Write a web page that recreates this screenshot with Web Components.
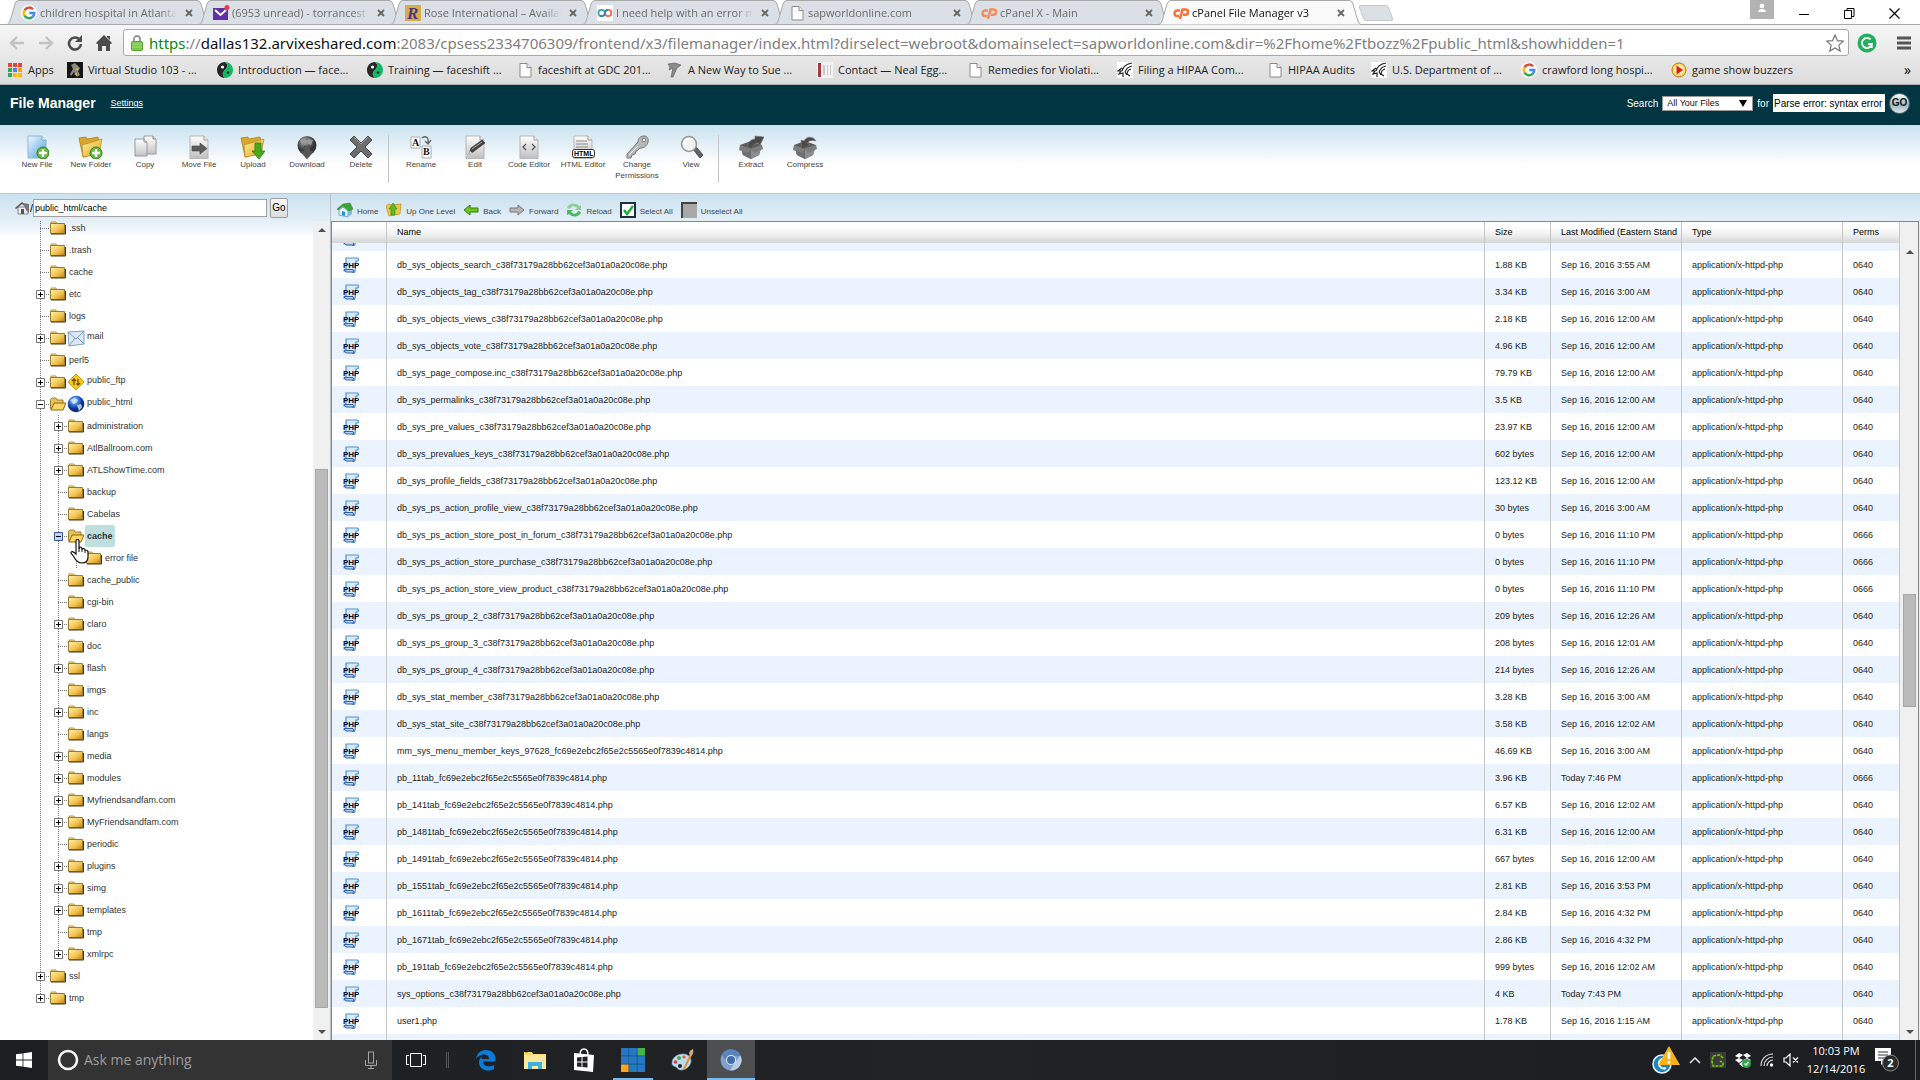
<!DOCTYPE html>
<html lang="en">
<head>
<meta charset="utf-8">
<title>cPanel File Manager v3</title>
<style>
html,body{margin:0;height:100%;overflow:hidden}
body{font-family:"Liberation Sans",Arial,sans-serif;background:#fff}
file-manager-page{height:100vh}
</style>
</head>
<body>
<file-manager-page></file-manager-page>
<script>
const UI = '"Open Sans","Noto Sans",sans-serif';
const page = '<path d="M3 1.500h7l4 4v9.500H3z" fill="#fff" stroke="#8a8a8a"/><path d="M10 1.500v4h4" fill="#eee" stroke="#8a8a8a"/>';
const doc = '<defs><linearGradient id="d" x2="0" y2="1"><stop stop-color="#fff"/><stop offset="1" stop-color="#bdbdbd"/></linearGradient></defs><path d="M3 1h14l4 4v19H3z" fill="url(#d)" stroke="#b5b5b5"/><path d="M17 1v4h4" fill="#f4f4f4" stroke="#999"/>';
const bigFolder = '<defs><linearGradient id="f" x2="1" y2="1"><stop stop-color="#ffefa0"/><stop offset="1" stop-color="#e0a520"/></linearGradient></defs><path d="M1 3l7-1 1 2 11-2 1 4 1 9-15 7H5z" fill="#d9a62e" stroke="#a87a12" stroke-width=".7"/><path d="M4 10l20-6-3 15-16 3z" fill="url(#f)" stroke="#b5861c" stroke-width=".7"/>';
const plus = '<circle cx="18" cy="18" r="6" fill="#66b83c" stroke="#34801c"/><path d="M18 14v8M14 18h8" stroke="#fff" stroke-width="2.400"/>';
const G = '<circle cx="8" cy="8" r="8" fill="#fff"/><g fill="none" stroke-width="2.400"><path d="M12 4.200A5.300 5.300 0 0 0 3.500 5.300" stroke="#ea4335"/><path d="M3.500 5.300A5.300 5.300 0 0 0 3.500 10.700" stroke="#fbbc05"/><path d="M3.500 10.700A5.300 5.300 0 0 0 11.500 12" stroke="#34a853"/><path d="M11.500 12A5.300 5.300 0 0 0 13.300 8H8.300" stroke="#4285f4"/></g>';
const cp = '<g fill="none" stroke="#ff6c2c" stroke-width="2.400"><path d="M7 5.500H4.200a2.700 2.700 0 0 0 0 5.400H6"/><path d="M7 14l2.500-9.500h3a2.500 2.500 0 0 1 0 5.200H10"/></g>';
const face = '<path d="M8 0C3 0 0 4 0 8s3 8 8 8c-3-3-3-5 0-8s3-6 0-8z" fill="#262626"/><path d="M8 0c5 0 8 4 8 8s-3 8-8 8c-3-3-3-5 0-8s3-6 0-8z" fill="#10b866"/><circle cx="5.500" cy="5" r="1.600" fill="#fff"/><circle cx="11" cy="10.500" r="1.300" fill="#262626"/>';
const hhs = '<path d="M0 0h16v16H0z" fill="#fff"/><g fill="none" stroke="#222" stroke-width="1.200"><path d="M15 1C9 2 6 5 5 9M15 4c-4 1-6 3-7 6M14 7c-3 1-4 3-4 5M5 6L1 9h3l-2 3 4-1v4M8 10l2 3M10 12l3 2"/></g>';
const box = '<path d="M1 10l11-4 11 4-3 10-8 4-8-4z" fill="#5c5c5c"/><path d="M1 10l11 4v10l-8-4z" fill="#6f6f6f"/><path d="M23 10l-11 4v10l8-4z" fill="#8d8d8d"/><path d="M12 14L1 10l-1 5 9 3zM12 14l11-4 1 4-9 4z" fill="#7d7d7d"/>';
const ICONS = {
 google:[16,16,G],
 mail:[16,16,'<path d="M0 3h15v12H0z" fill="#6230a5"/><path d="M2 5l5.500 5L13 5" fill="none" stroke="#fff" stroke-width="2"/><circle cx="14" cy="2.500" r="2.500" fill="#f33"/>'],
 rose:[16,16,'<path d="M0 0h16v16H0z" fill="#d6ae46"/><text x="2" y="14" font-family="Liberation Serif" font-style="italic" font-weight="bold" font-size="17" fill="#51318c">R</text>'],
 loops:[16,16,'<path d="M0 0h16v16H0z" fill="#fff"/><g fill="none" stroke-width="1.800"><circle cx="4.600" cy="8" r="3.200" stroke="#3aa6a0"/><path d="M8 8a3.200 3.200 0 1 1 3.200 3.200A3.200 3.200 0 0 1 8 8" stroke="#ef6b4e"/><path d="M8 8a3.200 3.200 0 0 1-5 2.500M8 8a3.200 3.200 0 0 1 3-3.200" stroke="#3a7fd0"/></g>'],
 page:[16,16,page], cp:[16,16,cp], face:[16,16,face], hhs:[16,16,hhs],
 close:[8,8,'<path d="M1 1l6 6M7 1L1 7" stroke="#666" stroke-width="1.800"/>'],
 back:[18,16,'<path d="M9 2L3 8l6 6M3 8h13" fill="none" stroke="#c2c2c2" stroke-width="2.400"/>'],
 fwd:[18,16,'<path d="M9 2l6 6-6 6M15 8H2" fill="none" stroke="#c2c2c2" stroke-width="2.400"/>'],
 reload:[18,16,'<path d="M13.500 4.500A6 6 0 1 0 15 9" fill="none" stroke="#4c4c4c" stroke-width="2.600"/><path d="M16 0v7H9z" fill="#4c4c4c"/>'],
 home:[18,16,'<path d="M9 0l8 8-1.400 1.200L15 8.500V16h-4v-5H7v5H3V8.500l-.6.700L1 8zM12 1h3v4l-3-3z" fill="#4c4c4c"/>'],
 lock:[12,16,'<path d="M3 8V4a3 3 0 0 1 6 0v4" fill="none" stroke="#969696" stroke-width="1.800"/><rect x=".5" y="6.500" width="11" height="9" rx="1" fill="#7cc84c" stroke="#56a32c"/><path d="M1 9h10M1 12h10" stroke="#a4de7e"/>'],
 star:[18,18,'<path d="M9 1l2.400 5.600 6 .500-4.600 4 1.400 6L9 13.900l-5.200 3.200 1.400-6-4.600-4 6-.500z" fill="#fff" stroke="#777" stroke-width="1.200"/>'],
 gram:[20,20,'<circle cx="10" cy="10" r="9.500" fill="#25ae60"/><path d="M13.500 6.500A5 5 0 1 0 14.800 11H11M14.800 11v4" fill="none" stroke="#fff" stroke-width="1.800"/>'],
 menu:[14,14,'<path d="M0 2h14M0 7h14M0 12h14" stroke="#555" stroke-width="3"/>'],
 user:[24,19,'<path d="M0 0h24v19H0z" fill="#b3b3b3"/><circle cx="12" cy="6" r="2.300" fill="#fff"/><path d="M8 12c0-4 8-4 8 0z" fill="#fff"/>'],
 min:[11,11,'<path d="M0 6.500h10" stroke="#000"/>'],
 restore:[11,11,'<path d="M.5 2.500h7v8h-7zM3 2.500v-2h7v8H8" fill="none" stroke="#000"/>'],
 x:[11,11,'<path d="M.5.500l10 10M10.500.500l-10 10" stroke="#000" stroke-width="1.200"/>'],
 apps:[14,14,'<path d="M0 0h4v4H0zM5 0h4v4H5zM10 0h4v4h-4z" fill="#e8443a"/><path d="M0 5h4v4H0z" fill="#34a853"/><path d="M5 5h4v4H5z" fill="#4285f4"/><path d="M10 5h4v4h-4z" fill="#fb9d05"/><path d="M0 10h4v4H0z" fill="#34a853"/><path d="M5 10h4v4H5zM10 10h4v4h-4z" fill="#fbbc05"/>'],
 vs:[16,16,'<path d="M0 0h16v16H0z" fill="#151515"/><path d="M4 3l4-2 5 5-2 3 2 4-3 2-3-5-3 4-1-2 3-5z" fill="#8b8b82"/><path d="M8 7l4-1-1 3zM7 12l3-1v3z" fill="#d8b430"/>'],
 saw:[16,16,'<path d="M1 2l7-1 6 2-4 3-4 9H4l2-9-4 2 1-3z" fill="#8c8c8c" stroke="#555" stroke-width=".6"/>'],
 neal:[16,16,'<path d="M0 0h16v16H0z" fill="#f2f2f2"/><path d="M1 1h3v14H1z" fill="#a33c42"/><path d="M6 3h2v10H6zM10 3h1v10h-1zM13 3h1v10h-1z" fill="#c9c9c9"/>'],
 buzz:[16,16,'<circle cx="8" cy="8" r="7" fill="#ffd75a" stroke="#b87a10"/><circle cx="8" cy="8" r="4.800" fill="#fff0c0"/><path d="M5.500 3.500l6.500 4.500-6.500 4.500z" fill="#e3180f"/>'],
 newfile:[24,24,'<defs><linearGradient id="n" x2="1" y2="1"><stop stop-color="#f4faff"/><stop offset="1" stop-color="#4f9fe0"/></linearGradient></defs><path d="M3 1h14l4 4v18H3z" fill="url(#n)" stroke="#88b8dc"/><path d="M17 1v4h4" fill="#fff" stroke="#7fa9c8"/>'+plus],
 newfolder:[26,24,bigFolder+plus],
 copy:[24,24,'<defs><linearGradient id="d" x2="0" y2="1"><stop stop-color="#fff"/><stop offset="1" stop-color="#c4c4c4"/></linearGradient></defs><path d="M11 1h9l3 3v15H11z" fill="url(#d)" stroke="#9a9a9a"/><path d="M2 4h9l3 3v14H2z" fill="url(#d)" stroke="#9a9a9a"/><path d="M11 4v3h3M20 1v3h3" fill="#eee" stroke="#888"/>'],
 move:[24,24,doc+'<path d="M5 11h8V8l7 5.500-7 5.500v-3H5z" fill="#5c5c5c" stroke="#444" stroke-width=".6"/>'],
 upload:[26,24,bigFolder+'<path d="M15 8h6v8h4l-6 8-7-8h3z" fill="#4aa81c" stroke="#2e7d0c" stroke-width=".8"/>'],
 download:[24,24,'<defs><radialGradient id="s" cx=".4" cy=".3"><stop stop-color="#aaa"/><stop offset="1" stop-color="#333"/></radialGradient></defs><circle cx="12" cy="10.500" r="9.500" fill="url(#s)"/><path d="M5 5l5-2 1 4-4 3zM13 4l5 1-2 5-4-2z" fill="#999"/><path d="M9 11h6v5h4l-7 8-7-8h4z" fill="#555" stroke="#444" stroke-width=".5"/>'],
 del:[24,24,'<path d="M5 1l7 7 7-7 4 4-7 7 7 7-4 4-7-7-7 7-4-4 7-7-7-7z" fill="#6d6d6d" stroke="#4a4a4a"/><path d="M5 2l7 7 7-7" fill="none" stroke="#a5a5a5"/>'],
 rename:[24,24,'<path d="M2 2h9v11H2zM13 11h9v12h-9z" fill="#fff" stroke="#aaa"/><g font-family="Liberation Serif" font-weight="bold" font-size="10" fill="#111"><text x="3" y="11">A</text><text x="14" y="20">B</text></g><path d="M13 3c4-3 7 0 6 5M16 6l3 3 3-4" fill="none" stroke="#666" stroke-width="1.400"/>'],
 edit:[24,24,doc+'<path d="M6 19l2-6L19 5l3 3L10 17z" fill="#444" stroke="#222" stroke-width=".5"/><path d="M9 14L19 7" stroke="#aaa"/><path d="M6 19l1-3 2 2z" fill="#fff"/>'],
 code:[24,24,doc+'<path d="M9 9l-3 3 3 3M15 9l3 3-3 3" fill="none" stroke="#555" stroke-width="1.300"/>'],
 html:[24,24,doc+'<path d="M5 6h11M5 9h12M5 12h12" stroke="#888"/><rect x="1.500" y="14.500" width="22" height="8" rx="2" fill="#fff" stroke="#333"/><text x="3" y="21" font-family="Liberation Sans" font-weight="bold" font-size="7" fill="#000">HTML</text>'],
 key:[24,24,'<path d="M13 7c0-4 3-6 6-6s5 2 4 6-4 6-7 6l-1 0-3 3-1 0-1 3-3 1-1 3H2v-4z" fill="#b8b8b8" stroke="#777"/><circle cx="19" cy="5" r="1.800" fill="#fff" stroke="#777"/><path d="M4 20l9-9" stroke="#eee"/>'],
 view:[24,24,'<path d="M14 14l3-2 7 8-3 3z" fill="#666" stroke="#444"/><circle cx="10" cy="9" r="7.500" fill="#f2f2f2" stroke="#999" stroke-width="1.600"/><path d="M5 9a5 5 0 0 1 5-5" fill="none" stroke="#fff" stroke-width="2"/>'],
 extract:[25,24,box+'<path d="M9 13c-1-5 3-9 7-9V1l9 1-4 8-2-2c-3 0-5 2-6 5z" fill="#4a4a4a" stroke="#777" stroke-width=".6"/>'],
 compress:[25,24,box+'<path d="M23 6c-2-4-9-6-12 0L8 5l1 9 8-4-3-2c2-3 6-3 9-2z" fill="#4a4a4a" stroke="#777" stroke-width=".6"/>'],
 ghome:[15,14,'<path d="M3 6h10v7H3z" fill="#eee" stroke="#888"/><path d="M0 7l7-6 7 6-1 1-6-5-6 5z" fill="#555"/><path d="M6 8h3v5H6z" fill="#555"/><path d="M8 2l6 1v9l-3-3z" fill="#777"/>'],
 chome:[16,16,'<path d="M2 8l4-3 5 4v6l-9-2z" fill="#e9f3fb" stroke="#6fa8d6"/><path d="M11 8l4-2v6l-4 3z" fill="#7fb8e8"/><path d="M5 9l3 1v4l-3-1z" fill="#1e90d8"/><path d="M0 7l6-5 7-1 3 6-4 2-6-5-5 4z" fill="#36a82e" stroke="#217a1c" stroke-width=".5"/>'],
 up:[16,16,'<path d="M0 4l3-2 2 1 10-1-1 10-11 2z" fill="#f2c746" stroke="#b88b1c" stroke-width=".7"/><path d="M5 13V7H3l4-6 4 6H9v6z" fill="#5fb92b" stroke="#3a8214" stroke-width=".6"/>'],
 larr:[16,16,'<path d="M1 8l6-5v3h8v4H7v3z" fill="#6cc81c" stroke="#347a0a"/>'],
 rarr:[16,16,'<path d="M15 8L9 3v3H1v4h8v3z" fill="#b5b5b5" stroke="#777"/>'],
 cyc:[16,16,'<path d="M1 6c1-5 9-6 12-2l2-1v5H9l2-2C8 3 5 4 4 7z" fill="#8fd09a"/><path d="M15 10c-1 5-9 6-12 2l-2 1V8h6l-2 2c3 3 6 2 7-1z" fill="#4cb85c"/>'],
 chk:[16,16,'<rect x="1" y="1" width="14" height="14" fill="#fff" stroke="#1c3045" stroke-width="2"/><path d="M4 8l3 4 6-8" fill="none" stroke="#1fae32" stroke-width="2.400"/>'],
 unchk:[16,16,'<rect x="1" y="1" width="15" height="15" fill="#a8a8a8"/><path d="M1 16V1h15" fill="none" stroke="#444" stroke-width="2"/>'],
 folder:[16,14,'<defs><linearGradient id="f" x2="1" y2="1"><stop stop-color="#fff3b0"/><stop offset=".6" stop-color="#f0c04a"/><stop offset="1" stop-color="#c07f10"/></linearGradient></defs><path d="M1 3V1h5l1 2" fill="#f6e3a0" stroke="#b99442"/><path d="M.5 2.500h14v10H.5z" fill="url(#f)" stroke="#9c7a30"/><path d="M1 13h14.500V4" fill="none" stroke="#4a3510"/>'],
 ofolder:[16,14,'<path d="M.5 12V2.500L2 1h4l1 2h6v3" fill="#e8c25a" stroke="#a1802f"/><path d="M1 13L4 6h12l-3 7z" fill="#fbd663" stroke="#8a6516"/>'],
 env:[18,18,'<path d="M1 3l16-1v13L2 17z" fill="#dbe9f7" stroke="#7f9fc0"/><path d="M1 3l8 7 8-8M2 17l6-8M17 15l-6-6" fill="none" stroke="#7f9fc0"/>'],
 ftp:[18,18,'<path d="M9 1l8 8-8 8-8-8z" fill="#f9c81e" stroke="#c99708"/><path d="M7 12V6M5 8l2-2 2 2M11 6v6M9.500 10.500l1.500 1.500 2-2" fill="none" stroke="#6e4c00" stroke-width="1.300"/>'],
 globe:[18,18,'<defs><radialGradient id="g" cx=".4" cy=".3"><stop stop-color="#a9d4ff"/><stop offset=".6" stop-color="#2f6fd8"/><stop offset="1" stop-color="#0d2c86"/></radialGradient></defs><circle cx="9" cy="9" r="8.300" fill="url(#g)"/><path d="M3 5l5-2 3 2-2 3-3 1zM10 10l4-1 1 3-3 4z" fill="#d7ecff" opacity=".8"/>'],
 php:[16,16,'<path d="M3 1h11c2 0 2 3 0 3h-1l-1 10c0 2-3 2-3 0H1c0-2 1-2 2-2z" fill="#d6eafc" stroke="#4f8fd0" stroke-width="1.200"/><path d="M1 12.500h9l1 2.500H3z" fill="#b5d3f2" stroke="#2f5fa5"/><text x="0" y="11" font-family="Liberation Sans" font-weight="bold" font-size="8" fill="#00062e">PHP</text>'],
 hand:[20,26,'<path d="M6 2c0-2 3-2 3 0v8l1-2c2 0 2 1 2 2 2-1 3 0 3 1 2 0 3 1 3 2v5c0 5-3 6-6 6-4 0-6-2-8-6l-3-4c0-2 2-2 5 1z" fill="#fff" stroke="#111" stroke-width="1.200"/><path d="M9 10v3M12 10v3M15 11v3" stroke="#111"/>'],
 win:[16,16,'<path d="M0 2.300l6.600-.900v6.200H0zM7.400 1.300L16 0v7.600H7.400zM0 8.400h6.600v6.200L0 13.700zM7.400 8.400H16V16l-8.600-1.200z" fill="#fff"/>'],
 cortana:[22,22,'<circle cx="11" cy="11" r="9" fill="none" stroke="#f4f4f4" stroke-width="2.600"/>'],
 mic:[12,18,'<rect x="3.500" y="1" width="5" height="11" fill="none" stroke="#a5a5a5"/><path d="M.5 9v5.500h11V9M6 14.500V17M3 17.500h6" fill="none" stroke="#a5a5a5"/>'],
 task:[20,16,'<path d="M4.500 1.500h11v13h-11zM3 3.500H.5v9H3M17 3.500h2.500v9H17" fill="none" stroke="#fff"/>'],
 edge:[22,22,'<path d="M1 10C2 3 7 1 11 1c6 0 9 4 9.500 8v3.500H8c0 5 7 6 11 3.500v4c-6 3.500-15 1-15-7 0-3 2-5 4-6-1 1-1.500 2-1.500 3H14c0-6-9-6-13 0z" fill="#0a7cd8"/>'],
 explorer:[22,19,'<path d="M0 1h8l1 2h13v15H0z" fill="#f8d775"/><path d="M0 4h22v14H0z" fill="#ffe79a"/><path d="M4 18v-7h14v7h-4v-3H8v3z" fill="#3bb1e5"/><path d="M1 1h3v1H1z" fill="#e5a400"/>'],
 store:[22,24,'<path d="M1 5l20 2-1 17-19-2z" fill="#fff"/><path d="M7 7c0-8 8-8 8 0" fill="none" stroke="#fff" stroke-width="1.500"/><path d="M4 9.500l4.500-.500v4.500H4zM9.500 9l5-.500v5h-5zM4 14.500h4.500V19L4 18.500zM9.500 14.500h5v5l-5-.500z" fill="#202124"/>'],
 grid9:[24,24,'<path d="M0 0h24v24H0z" fill="#1b4f80"/><path d="M0 0h7.500v7.500H0zM8.200 0h7.500v7.500H8.200zM0 8.200h7.500v7.500H0zM8.200 8.200h7.500v7.500H8.200zM16.500 8.200H24v7.500h-7.500zM8.200 16.500h7.500V24H8.200zM16.500 16.500H24V24h-7.500z" fill="#2578c4"/><path d="M16.500 0H24v7.500h-7.500z" fill="#43b549"/><path d="M0 16.500h7.500V24H0z" fill="#fda31c"/>'],
 paint:[24,24,'<path d="M2 15c0-6 6-9 11-9s8 3 8 7-4 9-10 9c-3 0-3-2-5-3s-4-1-4-4z" fill="#b8ddf0" stroke="#7ba9c0" stroke-width=".6"/><circle cx="9" cy="10" r="2" fill="#4aae3a"/><circle cx="5.500" cy="14" r="1.800" fill="#e23b34"/><circle cx="14" cy="9" r="1.600" fill="#e85b36"/><circle cx="10" cy="18" r="2" fill="#202124"/><path d="M13 21L20 6l2 1-7 14z" fill="#e8892a"/><path d="M19 6c0-3 2-4 4-5 1 3 0 6-2 7z" fill="#d1a878"/>'],
 chromium:[22,22,'<circle cx="11" cy="11" r="10.500" fill="#7f9fcf"/><path d="M11 .5a10.500 10.500 0 0 1 9.500 6H11z" fill="#4a73b0"/><path d="M1.500 6A10.500 10.500 0 0 1 20.500 6.500H11L6.500 12z" fill="#5b84bf"/><path d="M20.500 6.500A10.500 10.500 0 0 1 10 21.500l5-8z" fill="#b9cde8"/><circle cx="11" cy="11" r="5" fill="#e8eff9"/><circle cx="11" cy="11" r="4" fill="#426ca8"/>'],
 warn:[28,28,'<circle cx="10" cy="18" r="9" fill="#1685c4" stroke="#e8f2fa" stroke-width="1.600"/><path d="M14 13a5 5 0 1 0 0 9" fill="none" stroke="#fff" stroke-width="2"/><path d="M17 0l11 19H6z" fill="#f9b41c"/><path d="M17 6v7M17 15v2.500" stroke="#fff" stroke-width="2.600"/>'],
 chev:[12,8,'<path d="M1 7l5-5 5 5" fill="none" stroke="#fff" stroke-width="1.400"/>'],
 nv:[16,16,'<path d="M0 0h16v16H0z" fill="#3b3b3b"/><path d="M13 6L10 3 3 4 2 9l1 5h10v-3l-3-2" fill="none" stroke="#77c800" stroke-width="1.600" stroke-dasharray="3 1"/>'],
 drop:[16,16,'<path d="M4 1L0 4l4 2 4-3zM12 1L8 3l4 3 4-2zM0 8l4 3 4-3-4-2zM16 8l-4 3-4-3 4-2zM4 12l4-3 4 3-4 3z" fill="#fff"/><circle cx="11.500" cy="11.500" r="4.500" fill="#2fa84a"/><path d="M9.500 11.500l1.500 1.500 2.500-3" fill="none" stroke="#fff" stroke-width="1.200"/>'],
 wifi:[14,14,'<g fill="none" stroke="#ddd" stroke-width="1.200"><path d="M1 13C1 6 6 1 13 1M4 13c0-5 4-9 9-9M7 13c0-3 3-6 6-6"/></g><circle cx="11.500" cy="12" r="1.700" fill="#fff"/>'],
 mute:[16,14,'<path d="M1 5h2l4-4v12L3 9H1zM10 4.500l5 5M15 4.500l-5 5" fill="none" stroke="#fff" stroke-width="1.200"/>'],
 note:[25,24,'<path d="M0 0h16v13h-6l-4 4v-4H0z" fill="#fff"/><path d="M3 4h10M3 7h10M3 10h6" stroke="#333"/><circle cx="15.500" cy="15" r="8" fill="#2b2c2e" stroke="#8a8a8a"/><text x="15.500" y="19" text-anchor="middle" font-family="Open Sans" font-weight="bold" font-size="11" fill="#fff">2</text>'],
};

class Base extends HTMLElement {
  constructor(){ super(); this.attachShadow({mode:'open'}); }
  connectedCallback(){ this.shadowRoot.innerHTML = '<style>*{box-sizing:border-box}'+this.css()+'</style>'+this.html(); }
  a(n){ return this.getAttribute(n) || ''; }
}
const I = (n) => `<ui-icon name="${n}"></ui-icon>`;

customElements.define('ui-icon', class extends Base {
  css(){ return ':host{display:block;flex:none;line-height:0}svg{display:block}'; }
  html(){ const [w,h,s]=ICONS[this.a('name')]; return `<svg width="${w}" height="${h}" viewBox="0 0 ${w} ${h}" aria-hidden="true">${s}</svg>`; }
});

customElements.define('browser-tab', class extends Base {
  css(){ return `:host{display:grid;width:202px;height:25px;margin-right:-10px;flex:none;color:#6a6a6a}
  :host([active]){color:#111;position:relative;z-index:1}
  svg,.in{grid-area:1/1}svg{display:block}
  .in{display:flex;align-items:center;min-width:0;padding:0 16px 0 14px;font:11px/16px ${UI};height:26px}
  .t{flex:1;min-width:0;margin:0 8px 0 3px;white-space:nowrap;overflow:hidden;-webkit-mask:linear-gradient(90deg,#000 88%,transparent);}
  button{border:0;background:none;padding:0}`; }
  html(){ const on=this.hasAttribute('active'), dim=!on&&this.a('icon')==='cp';
   return `<svg width="202" height="25" aria-hidden="true"><path d="M0 24.500C3 23.500 3 21 4 18L8 4Q9 .5 12 .5H190Q193 .5 194 4L198 18C199 21 199 23.500 202 24.500" fill="${on?'#fafafa':'#dbe0e7'}" stroke="#a7a9ab"/>${on?'':'<path d="M0 24.500h202" stroke="#a7a9ab"/>'}</svg>
   <div class="in"><span${dim?' style="opacity:.75"':''}>${I(this.a('icon'))}</span><span class="t"><slot></slot></span><button aria-label="Close tab">${I('close')}</button></div>`; }
});

customElements.define('browser-bookmark', class extends Base {
  css(){ return `:host{display:block;flex:0 0 150px}:host([short]){flex-basis:104px}a{display:flex;align-items:center;gap:5px;color:#222;text-decoration:none;white-space:nowrap;font:11px/16px ${UI}}`; }
  html(){ return `<a href="#">${I(this.a('icon'))}<span><slot></slot></span></a>`; }
});

customElements.define('browser-chrome', class extends Base {
  css(){ return `:host{display:block;height:85px;background:linear-gradient(#f6f6f6 25px,#dcdcdc);border-bottom:1px solid #b0b0b0}
  .tabs{display:flex;height:25px;background:#fff;border-bottom:1px solid #a7a9ab;padding-left:7px}
  .new{width:30px;height:16px;margin:5px 0 0 10px;border:1px solid #c4c8ce;border-radius:3px;background:#dbe0e7;transform:skewX(20deg);padding:0}
  .win{margin-left:auto;display:flex;gap:34px;padding-right:20px}.win button{border:0;background:none;padding:0;display:flex;align-items:center;height:26px}
  .win .u{align-items:flex-start;margin-right:-9px}
  .bar{display:flex;align-items:center;height:31px;padding:4px 9px 0 8px}
  .nav{display:flex;gap:11px;width:115px}button{border:0;background:none;padding:0}
  .url{flex:1;display:flex;align-items:center;height:27px;border:1px solid #a9a9a9;border-radius:3px;background:#fff;padding:0 4px 0 7px;gap:6px}
  .url label{flex:1;white-space:nowrap;font:15px/22px "Noto Sans",sans-serif;color:#808080}.url b{font-weight:400;color:#0a8a0a}.url i{font-style:normal;color:#111}
  .ext{display:flex;align-items:center;gap:22px;margin-left:8px}
  .marks{display:flex;align-items:center;height:26px;padding:0 9px 0 8px;margin-top:1px}
  .apps{flex:0 0 59px;display:flex;align-items:center;gap:6px;font:11px/16px ${UI};color:#222}
  .more{margin-left:auto;font:14px/16px ${UI}}
  .ext{gap:20px}`; }
  html(){ return `<div class="tabs">
   <browser-tab icon="google">children hospital in Atlanta</browser-tab><browser-tab icon="mail">(6953 unread) - torrancest</browser-tab><browser-tab icon="rose">Rose International – Availab</browser-tab><browser-tab icon="loops">I need help with an error m</browser-tab><browser-tab icon="page">sapworldonline.com</browser-tab><browser-tab icon="cp">cPanel X - Main</browser-tab><browser-tab icon="cp" active>cPanel File Manager v3</browser-tab>
   <button class="new" aria-label="New tab"></button>
   <div class="win"><button class="u" aria-label="User">${I('user')}</button><button aria-label="Minimize">${I('min')}</button><button aria-label="Restore">${I('restore')}</button><button aria-label="Close">${I('x')}</button></div></div>
  <div class="bar"><div class="nav"><button aria-label="Back">${I('back')}</button><button aria-label="Forward">${I('fwd')}</button><button aria-label="Reload">${I('reload')}</button><button aria-label="Home">${I('home')}</button></div>
   <div class="url">${I('lock')}<label><b>https</b>://<i>dallas132.arvixeshared.com</i>:2083/cpsess2334706309/frontend/x3/filemanager/index.html?dirselect=webroot&amp;domainselect=sapworldonline.com&amp;dir=%2Fhome%2Ftbozz%2Fpublic_html&amp;showhidden=1</label>${I('star')}</div>
   <div class="ext">${I('gram')}<button aria-label="Menu">${I('menu')}</button></div></div>
  <div class="marks"><span class="apps">${I('apps')}<span>Apps</span></span>
   <browser-bookmark icon="vs">Virtual Studio 103 - ...</browser-bookmark><browser-bookmark icon="face">Introduction — face...</browser-bookmark><browser-bookmark icon="face">Training — faceshift ...</browser-bookmark><browser-bookmark icon="page">faceshift at GDC 201...</browser-bookmark><browser-bookmark icon="saw">A New Way to Sue ...</browser-bookmark><browser-bookmark icon="neal">Contact — Neal Egg...</browser-bookmark><browser-bookmark icon="page">Remedies for Violati...</browser-bookmark><browser-bookmark icon="hhs">Filing a HIPAA Com...</browser-bookmark><browser-bookmark icon="page" short>HIPAA Audits</browser-bookmark><browser-bookmark icon="hhs">U.S. Department of ...</browser-bookmark><browser-bookmark icon="google">crawford long hospi...</browser-bookmark><browser-bookmark icon="buzz">game show buzzers</browser-bookmark>
   <span class="more">»</span></div>`; }
});

customElements.define('fm-header', class extends Base {
  css(){ return `:host{display:flex;align-items:center;height:40px;background:#003541;color:#fff;padding:0 10px 4px;font-size:10px}
  h1{font-size:14px;line-height:20px;margin:0 15px 0 0}a{color:#fff;font-size:9px;line-height:12px}
  form{margin-left:auto;display:flex;align-items:center;gap:4px}
  .sel{display:grid;align-items:center}.sel select,.sel svg{grid-area:1/1}.sel svg{justify-self:end;margin-right:6px;pointer-events:none}
  select{appearance:none;width:91px;height:15px;border:1px solid #999;border-radius:0;background:#fff;color:#111;font:9px/12px "Liberation Sans";padding:0 4px}
  input{width:112px;height:18px;border:0;padding:0 1px;font:10px/16px "Liberation Sans";color:#000;background:#fff}
  button{width:21px;height:21px;border:1px solid #567;border-radius:50%;padding:0;background:linear-gradient(#fff,#9fb4bd 55%,#dfe8ec);font:bold 10px/18px "Liberation Sans";color:#0a1a22}`; }
  html(){ return `<h1>File Manager</h1><a href="#">Settings</a>
  <form onsubmit="return false"><label for="s">Search</label><span class="sel"><select id="s"><option>All Your Files</option></select><svg width="8" height="7"><path d="M0 0h8L4 7z"/></svg></span><label for="q">for</label><input id="q" value="Parse error: syntax error"><button>GO</button></form>`; }
});

customElements.define('tool-button', class extends Base {
  css(){ return `:host{display:block;flex:0 0 54px}button{width:100%;border:0;background:none;padding:0;display:flex;flex-direction:column;align-items:center;font:8px/11px "Liberation Sans";color:#444;text-align:center}`; }
  html(){ return `<button>${I(this.a('icon'))}<span><slot></slot></span></button>`; }
});
customElements.define('fm-toolbar', class extends Base {
  css(){ return `:host{display:flex;height:69px;padding:10px;background:linear-gradient(#cbe2f0,#fff 40px);border-bottom:1px solid #c6c6ca}i{width:1px;height:48px;background:#c4c4c4;margin:0 5px 0 0}`; }
  html(){ const t=(i,l)=>`<tool-button icon="${i}">${l}</tool-button>`;
   return t('newfile','New File')+t('newfolder','New Folder')+t('copy','Copy')+t('move','Move File')+t('upload','Upload')+t('download','Download')+t('del','Delete')+'<i></i>'+t('rename','Rename')+t('edit','Edit')+t('code','Code Editor')+t('html','HTML Editor')+t('key','Change Permissions')+t('view','View')+'<i></i>'+t('extract','Extract')+t('compress','Compress'); }
});

customElements.define('scroll-bar', class extends Base {
  css(){ const [a,b,c]=this.a('split').split(' '); return `:host{display:flex;flex-direction:column;align-items:center;width:17px;flex:none;background:#f0f0f0}
  .e{height:17px;display:flex;align-items:center}.a{flex:${a} 1 0}.b{flex:${b} 1 0;width:13px;background:#bababa;border:1px solid #a6a6a6}.c{flex:${c} 1 0}svg{display:block}`; }
  html(){ return '<div class="e"><svg width="8" height="4"><path d="M0 4L4 0l4 4z" fill="#505050"/></svg></div><div class="a"></div><div class="b"></div><div class="c"></div><div class="e"><svg width="8" height="4"><path d="M0 0l4 4 4-4z" fill="#505050"/></svg></div>'; }
});

customElements.define('tree-node', class extends Base {
  css(){ return `:host{display:flex;align-items:center;height:22px;padding-left:31px;position:relative;font-size:9px;line-height:22px;color:#333}
  .g{width:18px;height:22px;flex:none;display:flex;align-items:center;justify-content:center;
    background:repeating-linear-gradient(#777 0 1px,transparent 1px 2px) 9px 0/1px var(--v,100%) no-repeat}
  .g.k{background:repeating-linear-gradient(#777 0 1px,transparent 1px 2px) 9px 0/1px var(--v,100%) no-repeat,repeating-linear-gradient(90deg,#777 0 1px,transparent 1px 2px) 9px 11px/9px 1px no-repeat}
  :host([last]) .g.k{--v:11px}
  .bx{width:9px;height:9px;margin-left:1px}.bx svg{display:block}
  .f{margin:0 1px}
  .l{padding:0 2px;border-radius:2px}
  .up{line-height:18px;padding-bottom:4px}
  :host([selected]) .l{background:#bfdfdf;font-weight:bold}
  .cur{position:absolute;left:70px;top:14px;z-index:3}`; }
  html(){ const d=+this.a('depth')||1, e=this.a('exp'), sel=this.hasAttribute('selected'), x=this.a('extra'); let g='';
   for(let i=1;i<=d;i++) g += i<d?'<span class="g"></span>':`<span class="g k">${e?`<span class="bx"><svg width="9" height="9"><path d="M.5.500h8v8h-8z" fill="${sel?'#c9d4ee':'#fff'}" stroke="${sel?'#3553a5':'#777'}"/><path d="M2 4.500h5${e==='+'?'M4.500 2v5':''}" stroke="#000"/></svg></span>`:''}</span>`;
   return g+`<span class="f">${I(e==='-'?'ofolder':'folder')}</span>${x?I(x):''}<span class="l${x?' up':''}"><slot></slot></span>${sel?`<span class="cur">${I('hand')}</span>`:''}`; }
});

const TREE = `1||.ssh
1||.trash
1||cache
1|+|etc
1||logs
1|+|mail|env
1||perl5
1|+|public_ftp|ftp
1|-|public_html|globe
2|+|administration
2|+|AtlBallroom.com
2|+|ATLShowTime.com
2||backup
2||Cabelas
2|-|cache|*
3||error file
2||cache_public
2||cgi-bin
2|+|claro
2||doc
2|+|flash
2||imgs
2|+|inc
2||langs
2|+|media
2|+|modules
2|+|Myfriendsandfam.com
2|+|MyFriendsandfam.com
2||periodic
2|+|plugins
2|+|simg
2|+|templates
2||tmp
2|+|xmlrpc|!
1|+|ssl
1|+|tmp|!`.split('\n').map(l=>l.split('|'));

customElements.define('fm-tree', class extends Base {
  css(){ return `:host{display:flex;flex-direction:column;width:330px;flex:none;background:linear-gradient(#cce2f0,#e3eff7 27px,#fff 44px)}
  form{display:flex;align-items:center;height:27px;padding:1px 0 0 15px;font-size:11px;flex:none}
  label{display:flex;align-items:center;width:18px}
  input{width:234px;height:18px;border:1px solid #a0a0a0;padding:0 1px;font:9px/14px "Liberation Sans";background:#fff}
  button{width:18px;height:20px;margin-left:3px;padding:0;border:1px solid #9c9c9c;border-radius:2px;background:linear-gradient(#f8f8f8,#ddd);font:10px/16px "Liberation Sans";color:#000}
  .b{flex:1;min-height:0;display:flex;justify-content:space-between;overflow:hidden}.t{margin-top:-4px}`; }
  html(){ return `<form onsubmit="return false"><label for="p">${I('ghome')}/</label><input id="p" value="public_html/cache"><button>Go</button></form>
  <div class="b"><div class="t">${TREE.map(([d,e,n,x])=>`<tree-node depth="${d}" exp="${e}"${x==='*'?' selected':x==='!'?' last':x?` extra="${x}"`:''}>${n}</tree-node>`).join('')}</div><scroll-bar split="232 538 15"></scroll-bar></div>`; }
});

const H='_c38f73179a28bb62cef3a01a0a20c08e.php', K='_fc69e2ebc2f65e2c5565e0f7839c4814.php';
const S='Sep 16, 2016 ';
const FILES=[['db_sys_objects_search'+H,'1.88 KB',S+'3:55 AM'],['db_sys_objects_tag'+H,'3.34 KB',S+'3:00 AM'],['db_sys_objects_views'+H,'2.18 KB',S+'12:00 AM'],['db_sys_objects_vote'+H,'4.96 KB',S+'12:00 AM'],['db_sys_page_compose.inc'+H,'79.79 KB',S+'12:00 AM'],['db_sys_permalinks'+H,'3.5 KB',S+'12:00 AM'],['db_sys_pre_values'+H,'23.97 KB',S+'12:00 AM'],['db_sys_prevalues_keys'+H,'602 bytes',S+'12:00 AM'],['db_sys_profile_fields'+H,'123.12 KB',S+'12:00 AM'],['db_sys_ps_action_profile_view'+H,'30 bytes',S+'3:00 AM'],['db_sys_ps_action_store_post_in_forum'+H,'0 bytes',S+'11:10 PM','0666'],['db_sys_ps_action_store_purchase'+H,'0 bytes',S+'11:10 PM','0666'],['db_sys_ps_action_store_view_product'+H,'0 bytes',S+'11:10 PM','0666'],['db_sys_ps_group_2'+H,'209 bytes',S+'12:26 AM'],['db_sys_ps_group_3'+H,'208 bytes',S+'12:01 AM'],['db_sys_ps_group_4'+H,'214 bytes',S+'12:26 AM'],['db_sys_stat_member'+H,'3.28 KB',S+'3:00 AM'],['db_sys_stat_site'+H,'3.58 KB',S+'12:02 AM'],['mm_sys_menu_member_keys_97628'+K,'46.69 KB',S+'3:00 AM'],['pb_11tab'+K,'3.96 KB','Today 7:46 PM','0666'],['pb_141tab'+K,'6.57 KB',S+'12:02 AM'],['pb_1481tab'+K,'6.31 KB',S+'12:00 AM'],['pb_1491tab'+K,'667 bytes',S+'12:00 AM'],['pb_1551tab'+K,'2.81 KB',S+'3:53 PM'],['pb_1611tab'+K,'2.84 KB',S+'4:32 PM'],['pb_1671tab'+K,'2.86 KB',S+'4:32 PM'],['pb_191tab'+K,'999 bytes',S+'12:02 AM'],['sys_options'+H,'4 KB','Today 7:43 PM'],['user1.php','1.78 KB',S+'1:15 AM']];

customElements.define('fm-files', class extends Base {
  css(){ return `:host{flex:1;min-width:0;display:flex;flex-direction:column;background:linear-gradient(#cce2f0,#e3eff7 27px);border-left:1px solid #b9bfc4}
  nav{display:flex;align-items:center;height:27px;flex:none;padding:4px 6px 0;gap:8px}
  nav button{display:flex;align-items:center;gap:4px;border:0;background:none;padding:0;font:8px/10px "Liberation Sans";color:#444}
  nav span{padding-top:4px}
  .grid{flex:1;min-height:0;display:flex;margin-right:1px;border:1px solid #868686;border-bottom:0;background:#fff}
  .view{flex:1;min-width:0;overflow:hidden}
  scroll-bar{margin:21px 0 0 1px}
  .side{display:flex;background:#f0f0f0}
  table{width:100%;table-layout:fixed;border-spacing:0;font-size:9px;line-height:12px;color:#222}
  th,td{padding:0 0 0 10px;border-right:1px solid #c6c6c6;height:27px;text-align:left;font-weight:400;white-space:nowrap;overflow:hidden}
  th{height:21px;background:linear-gradient(#fff 20%,#f0f0f0 60%,#d3d5d7);color:#000;padding-bottom:1px}
  td:first-child{padding-left:11px}
  .cut td{height:8px;line-height:0;vertical-align:top}
  .cut div{height:3px;display:flex;align-items:flex-end;overflow:hidden}
  tbody tr:nth-child(odd){background:#ebf4fe}`; }
  html(){ const b=(i,l)=>`<button>${I(i)}<span>${l}</span></button>`;
   const row=(r)=>`<tr><td>${I('php')}</td><td>${r[0]}</td><td>${r[1]}</td><td>${r[2]}</td><td>application/x-httpd-php</td><td>${r[3]||'0640'}</td></tr>`;
   const rest='<td></td>'.repeat(5);
   return `<nav>${b('chome','Home')+b('up','Up One Level')+b('larr','Back')+b('rarr','Forward')+b('cyc','Reload')+b('chk','Select All')+b('unchk','Unselect All')}</nav>
   <div class="grid"><div class="view"><table><colgroup><col style="width:55px"><col><col style="width:66px"><col style="width:131px"><col style="width:161px"><col style="width:57px"></colgroup>
   <thead><tr><th></th><th>Name</th><th>Size</th><th>Last Modified (Eastern Stand</th><th>Type</th><th>Perms</th></tr></thead>
   <tbody><tr class="cut"><td><div>${I('php')}</div></td>${rest}</tr>${FILES.map(row).join('')}<tr><td></td>${rest}</tr></tbody></table></div>
   <div class="side"><scroll-bar split="335 111 317"></scroll-bar></div></div>`; }
});

customElements.define('task-bar', class extends Base {
  css(){ return `:host{display:flex;height:40px;flex:none;background:linear-gradient(90deg,#1d1e21,#222325 50%,#1b1d21);color:#fff;font:11px/18px ${UI}}
  button{border:0;background:none;padding:0;height:40px;width:48px;display:flex;align-items:center;justify-content:center;color:inherit;font:inherit}
  .q{display:flex;align-items:center;width:344px;background:#333;padding:0 15px 0 9px}
  input{flex:1;min-width:0;border:0;background:none;outline:0;padding:0 5px;font:14px/20px ${UI}}input::placeholder{color:#9d9d9d;opacity:1}
  .sep{width:3px;height:16px;border:solid #555;border-width:0 1px;margin:12px 13px 0 6px}
  .apps{display:flex;gap:1px}.on{background:#4d4e50;box-shadow:inset 0 -2px #76b9ed}.run{box-shadow:inset 0 -2px #76b9ed;width:40px;margin:0 4px}
  .tray{margin-left:auto;display:flex;align-items:center}.ic{display:flex;align-items:center;gap:9px}
  .ck{text-align:center;width:74px;margin-right:2px}.tray button{width:25px}
  .end{width:5px;height:40px;border-left:1px solid #66676a;margin-left:15px}`; }
  html(){ return `<button aria-label="Start">${I('win')}</button><div class="q">${I('cortana')}<input aria-label="Search" placeholder="Ask me anything">${I('mic')}</div>
  <button aria-label="Task view">${I('task')}</button><span class="sep"></span>
  <div class="apps"><button aria-label="Edge">${I('edge')}</button><button aria-label="Explorer">${I('explorer')}</button><button aria-label="Store">${I('store')}</button><button class="run" aria-label="Tiles">${I('grid9')}</button><button aria-label="Paint">${I('paint')}</button><button class="on" aria-label="Chromium">${I('chromium')}</button></div>
  <div class="tray"><div class="ic">${I('warn')+I('chev')+I('nv')+I('drop')+I('wifi')+I('mute')}</div><div class="ck">10:03 PM<br>12/14/2016</div><button aria-label="Notifications">${I('note')}</button><span class="end"></span></div>`; }
});

customElements.define('file-manager-page', class extends Base {
  css(){ return ':host{display:flex;flex-direction:column}main{flex:1;min-height:0;display:flex}browser-chrome,fm-header,fm-toolbar{flex:none}'; }
  html(){ return '<browser-chrome></browser-chrome><fm-header></fm-header><fm-toolbar></fm-toolbar><main><fm-tree></fm-tree><fm-files></fm-files></main><task-bar></task-bar>'; }
});
</script>
</body>
</html>
